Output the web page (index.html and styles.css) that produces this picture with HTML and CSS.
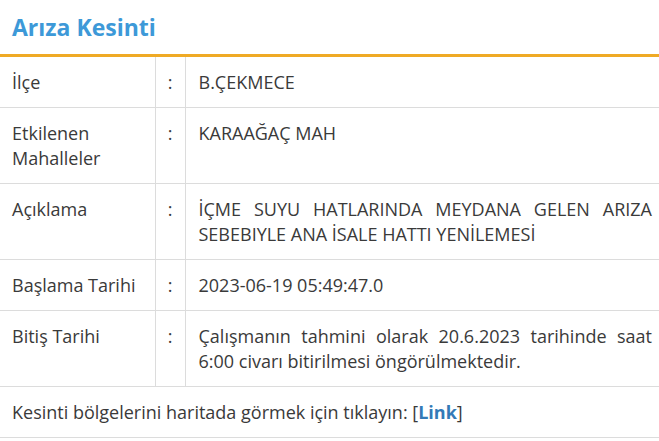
FILE: index.html
```html
<!DOCTYPE html>
<html lang="tr">
<head>
  <meta charset="UTF-8">
  <title>Arıza Kesinti</title>
  <link rel="stylesheet" href="styles.css">
</head>
<body>
  <div class="panel">
    <h2 class="panel-title">Arıza Kesinti</h2>
    <table class="info">
      <tr>
        <td class="label">İlçe</td>
        <td class="sep">:</td>
        <td class="value">B.ÇEKMECE</td>
      </tr>
      <tr>
        <td class="label">Etkilenen Mahalleler</td>
        <td class="sep">:</td>
        <td class="value">KARAAĞAÇ MAH</td>
      </tr>
      <tr>
        <td class="label">Açıklama</td>
        <td class="sep">:</td>
        <td class="value">İÇME SUYU HATLARINDA MEYDANA GELEN ARIZA SEBEBIYLE ANA İSALE HATTI YENİLEMESİ</td>
      </tr>
      <tr>
        <td class="label">Başlama Tarihi</td>
        <td class="sep">:</td>
        <td class="value">2023-06-19 05:49:47.0</td>
      </tr>
      <tr>
        <td class="label">Bitiş Tarihi</td>
        <td class="sep">:</td>
        <td class="value">Çalışmanın tahmini olarak 20.6.2023 tarihinde saat 6:00 civarı bitirilmesi öngörülmektedir.</td>
      </tr>
    </table>
    <div class="map-note">Kesinti bölgelerini haritada görmek için tıklayın: [<a href="#">Link</a>]</div>
  </div>
</body>
</html>
```

FILE: styles.css
```css
body {
  margin: 0;
  font-family: "Open Sans", Arial, sans-serif;
  background: #fff;
  color: #3a3a3a;
}
.panel {
  width: 100%;
}
.panel-title {
  margin: 0;
  height: 54px;
  line-height: 54px;
  padding-left: 12px;
  font-size: 23px;
  font-weight: 700;
  color: #3d99d8;
  border-bottom: 3px solid #efaa25;
}
.info {
  width: 100%;
  border-collapse: collapse;
  table-layout: fixed;
  font-size: 18px;
  line-height: 25px;
}
.info td {
  box-sizing: border-box;
  vertical-align: top;
  padding: 13px 7px 12px 12px;
  border-bottom: 1px solid #dcdcdc;
}
.info .label {
  width: 155px;
  padding-right: 8px;
  border-right: 1px solid #dcdcdc;
}
.info .sep {
  width: 30px;
  padding: 13px 0 12px 0;
  text-align: center;
  border-right: 1px solid #dcdcdc;
}
.info .value {
  padding-left: 13px;
  text-align: justify;
}
.map-note {
  padding: 13px 12px 12px 12px;
  font-size: 18px;
  line-height: 25px;
  border-bottom: 1px solid #dcdcdc;
}
.map-note a {
  color: #337ab7;
  font-weight: 700;
  text-decoration: none;
}
```
